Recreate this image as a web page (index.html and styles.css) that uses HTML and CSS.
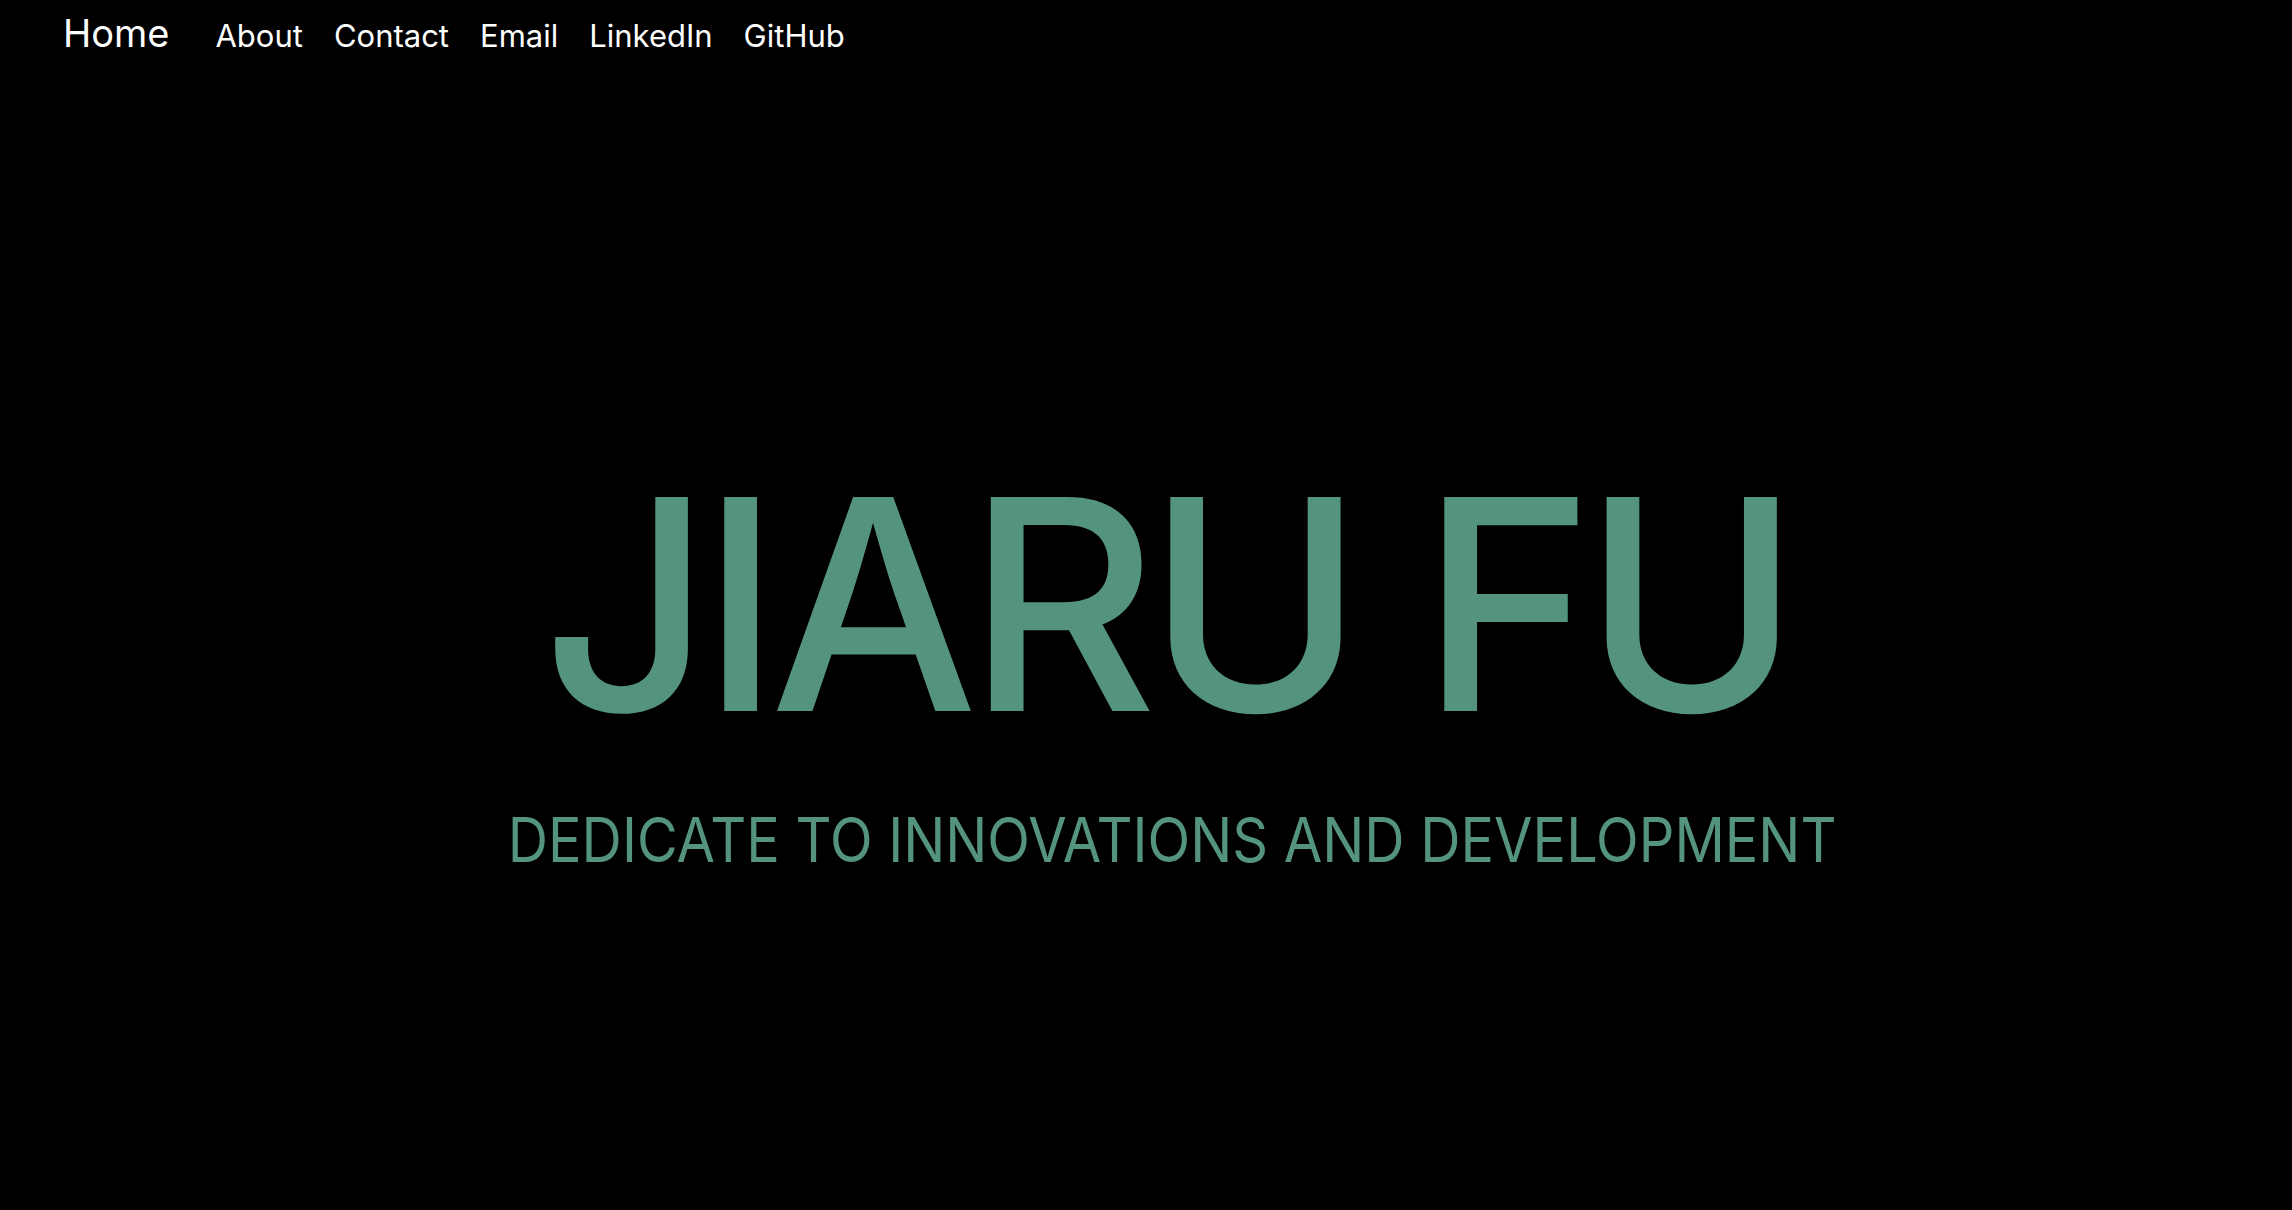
FILE: index.html
```html
<!DOCTYPE html>
<html lang="en">
<head>
<meta charset="utf-8">
<title>Jiaru Fu</title>
<link rel="stylesheet" href="styles.css">
</head>
<body>
<nav class="nav">
  <a class="brand" href="#">Home</a>
  <ul class="links">
    <li><a href="#">About</a></li>
    <li><a href="#">Contact</a></li>
    <li><a href="#">Email</a></li>
    <li><a href="#">LinkedIn</a></li>
    <li><a href="#">GitHub</a></li>
  </ul>
</nav>
<main class="hero">
  <h1 class="title">JIARU FU</h1>
  <p class="subtitle">DEDICATE TO INNOVATIONS AND DEVELOPMENT</p>
</main>
</body>
</html>
```
FILE: styles.css
```css
html, body {
  margin: 0;
  padding: 0;
  background: #000;
  height: 100%;
}
body {
  font-family: Inter, "Noto Sans", sans-serif;
  color: #fff;
  overflow: hidden;
}
.nav {
  display: flex;
  align-items: baseline;
  padding: 10px 0 0 63px;
  height: 60px;
  box-sizing: border-box;
}
.brand {
  color: #fff;
  text-decoration: none;
  font-size: 38px;
  margin-right: 46px;
}
.links {
  display: flex;
  gap: 31px;
  list-style: none;
  margin: 0;
  padding: 0;
}
.links a {
  color: #fff;
  text-decoration: none;
  font-size: 31px;
}
.hero {
  display: flex;
  flex-direction: column;
  align-items: center;
  padding-left: 52px;
  padding-top: 397px;
}
.title {
  margin: 0;
  padding-right: 12px;
  font-size: 294px;
  font-weight: 500;
  line-height: 1;
  color: #54947f;
  letter-spacing: -11px;
}
.subtitle {
  margin: 51px 0 0;
  font-size: 62px;
  font-weight: 400;
  color: #54947f;
  transform: scaleX(0.9);
  transform-origin: center;
}
```
